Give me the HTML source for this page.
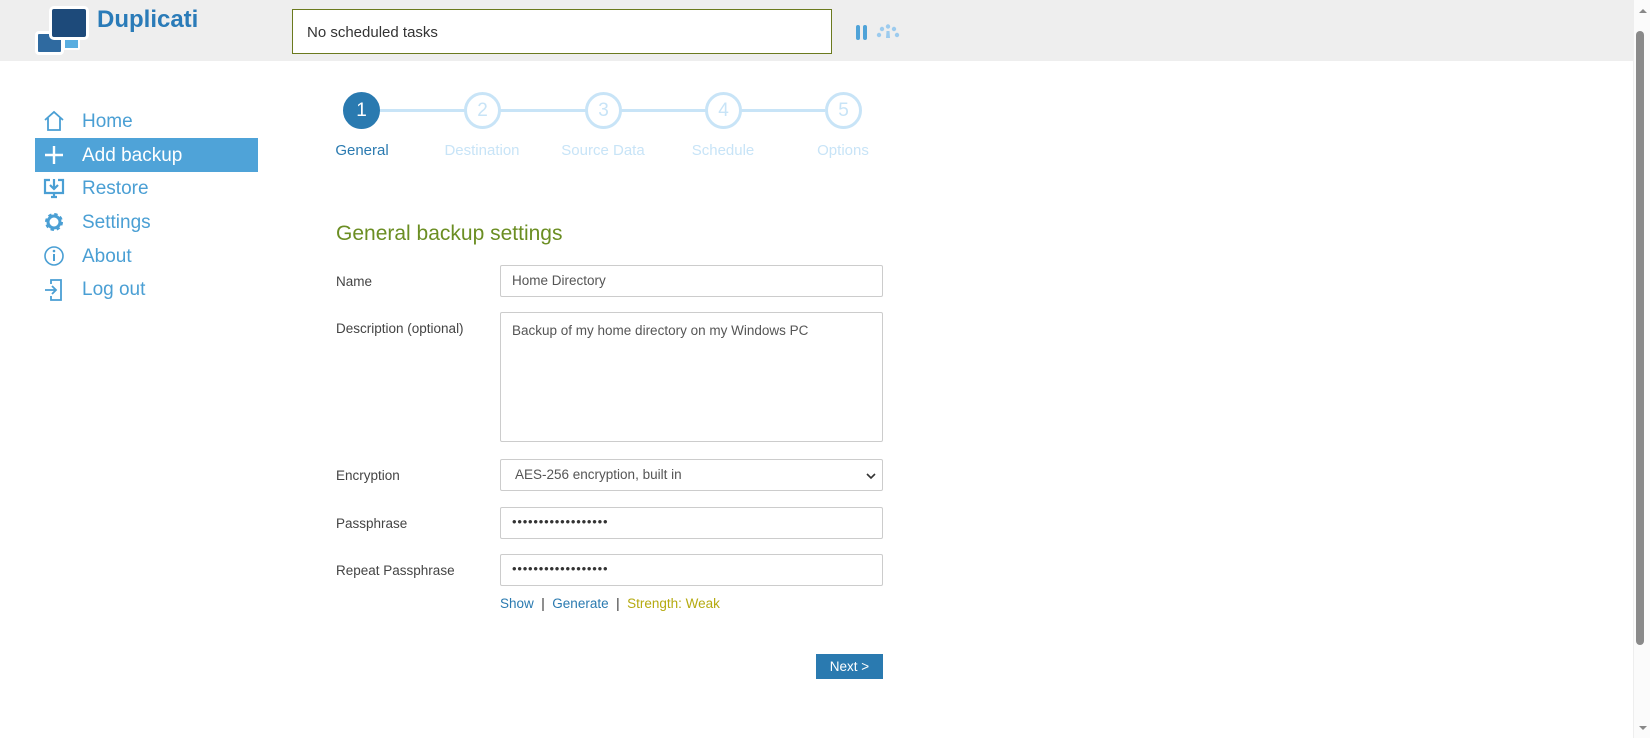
<!DOCTYPE html>
<html><head><meta charset="utf-8"><style>
*{box-sizing:border-box;margin:0;padding:0}
body{width:1650px;height:738px;overflow:hidden;background:#fff;font-family:"Liberation Sans",sans-serif;position:relative}
.hdr{position:absolute;left:0;top:0;width:1633px;height:61px;background:#eeeeee}
.sb{position:absolute;left:1633px;top:0;width:17px;height:738px;background:#fbfbfb;border-left:1px solid #eee}
.thumb{position:absolute;left:1636px;top:31px;width:8px;height:614px;background:#8a8a8a;border-radius:4px}
.abs{position:absolute}
.nav{position:absolute;left:35px;width:223px;height:34px;font-size:19px;color:#4a9fd4;line-height:35px;padding-left:47px}
.nav.act{background:#4fa3d8;color:#fff}
.nav svg{position:absolute;left:7px;top:6px}
.circ{position:absolute;width:37px;height:37px;border-radius:50%;border:3px solid #c8e4f7;background:#fff;color:#c8e4f7;font-size:19px;text-align:center;line-height:31px;top:92px}
.step{position:absolute;top:142px;font-size:15px;color:#c8e4f7;width:120px;text-align:center}
.lbl{position:absolute;left:336px;font-size:13.5px;color:#444}
.inp{position:absolute;left:500px;width:383px;border:1px solid #ccc;border-radius:2px;background:#fff;font-size:13.5px;color:#555;padding-left:11px}
.pw{font-size:13px;line-height:28px;letter-spacing:0.8px;color:#333}
</style></head><body>
<div class="hdr"></div>
<div class="sb"></div><div class="thumb"></div>
<div class="abs" style="left:1639px;top:9px;width:0;height:0;border-left:4px solid transparent;border-right:4px solid transparent;border-bottom:4px solid #888"></div>
<div class="abs" style="left:1639px;top:726px;width:0;height:0;border-left:4px solid transparent;border-right:4px solid transparent;border-top:4px solid #888"></div>
<!-- logo -->
<div class="abs" style="left:35px;top:31px;width:29px;height:24px;background:#2f6aa0;border:3px solid #fff;border-radius:4px"></div>
<div class="abs" style="left:63px;top:38px;width:17px;height:12px;background:#5aaee0;border:2px solid #fff;border-radius:2px"></div>
<div class="abs" style="left:49px;top:6px;width:40px;height:34px;background:#1d4a7a;border:3px solid #fff;border-radius:5px"></div>
<div class="abs" style="left:97px;top:6px;font-size:24px;font-weight:bold;color:#2a7bb8">Duplicati</div>
<div class="abs" style="left:292px;top:9px;width:540px;height:45px;border:1px solid #6b7a1e;background:#fff;font-size:15px;color:#333;line-height:45px;padding-left:14px">No scheduled tasks</div>
<div class="abs" style="left:856px;top:25px;width:4px;height:15px;background:#4fa3d8;border-radius:2px"></div>
<div class="abs" style="left:863px;top:25px;width:4px;height:15px;background:#4fa3d8;border-radius:2px"></div>
<svg class="abs" style="left:876px;top:24px" width="24" height="16"><g fill="#9ccbee"><circle cx="3" cy="11" r="2.2"/><circle cx="6" cy="5" r="2.2"/><circle cx="12" cy="2.5" r="2.2"/><circle cx="18" cy="5" r="2.2"/><circle cx="21" cy="11" r="2.2"/><path d="M10.5 7 L13.5 7 L14 14 L10 14Z"/></g></svg>
<!-- nav -->
<div class="nav" style="top:104px"><svg width="24" height="22" viewBox="0 0 24 22"><path d="M3 10 L12 2 L21 10 M6 8 V20 H18 V8" fill="none" stroke="#4a9fd4" stroke-width="1.8"/></svg>Home</div>
<div class="nav act" style="top:138px"><svg width="24" height="22" viewBox="0 0 24 22"><path d="M12 2 V20 M3 11 H21" stroke="#fff" stroke-width="2.4"/></svg>Add backup</div>
<div class="nav" style="top:171px"><svg width="24" height="22" viewBox="0 0 24 22"><path d="M8 3 H3 V16 H21 V3 H16 M12 2 V11 M8 8 L12 12 L16 8 M9 20 H15 M12 16 V20" fill="none" stroke="#4a9fd4" stroke-width="2.2"/></svg>Restore</div>
<div class="nav" style="top:205px"><svg width="24" height="22" viewBox="0 0 24 22"><circle cx="12" cy="11" r="7" fill="none" stroke="#4a9fd4" stroke-width="4" stroke-dasharray="3 2.5"/><circle cx="12" cy="11" r="6" fill="none" stroke="#4a9fd4" stroke-width="3"/></svg>Settings</div>
<div class="nav" style="top:239px"><svg width="24" height="22" viewBox="0 0 24 22"><circle cx="12" cy="11" r="9" fill="none" stroke="#4a9fd4" stroke-width="1.6"/><path d="M12 9 V16" stroke="#4a9fd4" stroke-width="2"/><circle cx="12" cy="6" r="1.3" fill="#4a9fd4"/></svg>About</div>
<div class="nav" style="top:272px"><svg width="24" height="24" viewBox="0 0 24 24"><path d="M9 6 V2 H19 V22 H9 V18 M3 12 H14 M10 8 L14 12 L10 16" fill="none" stroke="#4a9fd4" stroke-width="1.8"/></svg>Log out</div>
<!-- stepper -->
<div class="abs" style="left:380px;top:109px;width:445px;height:3px;background:#c8e4f7"></div>
<div class="circ" style="left:343px;background:#2a7ab0;border-color:#2a7ab0;color:#fff">1</div>
<div class="circ" style="left:464px">2</div>
<div class="circ" style="left:585px">3</div>
<div class="circ" style="left:705px">4</div>
<div class="circ" style="left:825px">5</div>
<div class="step" style="left:302px;color:#2a7ab0">General</div>
<div class="step" style="left:422px">Destination</div>
<div class="step" style="left:543px">Source Data</div>
<div class="step" style="left:663px">Schedule</div>
<div class="step" style="left:783px">Options</div>
<!-- form -->
<div class="abs" style="left:336px;top:222px;font-size:21px;color:#6b8e23">General backup settings</div>
<div class="lbl" style="top:274px">Name</div>
<div class="inp" style="top:265px;height:32px;line-height:30px">Home Directory</div>
<div class="lbl" style="top:321px">Description (optional)</div>
<div class="inp" style="top:312px;height:130px;padding-top:10px">Backup of my home directory on my Windows PC</div>
<div class="lbl" style="top:468px">Encryption</div>
<div class="inp" style="top:459px;height:32px;line-height:30px;padding-left:14px">AES-256 encryption, built in<svg class="abs" style="right:6px;top:12px" width="10" height="8"><path d="M1 2 L5 6 L9 2" fill="none" stroke="#333" stroke-width="1.6"/></svg></div>
<div class="lbl" style="top:516px">Passphrase</div>
<div class="inp pw" style="top:507px;height:32px">••••••••••••••••••</div>
<div class="lbl" style="top:563px">Repeat Passphrase</div>
<div class="inp pw" style="top:554px;height:32px">••••••••••••••••••</div>
<div class="abs" style="left:500px;top:596px;font-size:13.5px;color:#333"><span style="color:#2a7ab0">Show</span> &nbsp;|&nbsp; <span style="color:#2a7ab0">Generate</span> &nbsp;|&nbsp; <span style="color:#b5aa10">Strength: Weak</span></div>
<div class="abs" style="left:816px;top:654px;width:67px;height:25px;background:#2a7ab0;color:#fff;font-size:13.5px;text-align:center;line-height:25px">Next &gt;</div>
</body></html>
